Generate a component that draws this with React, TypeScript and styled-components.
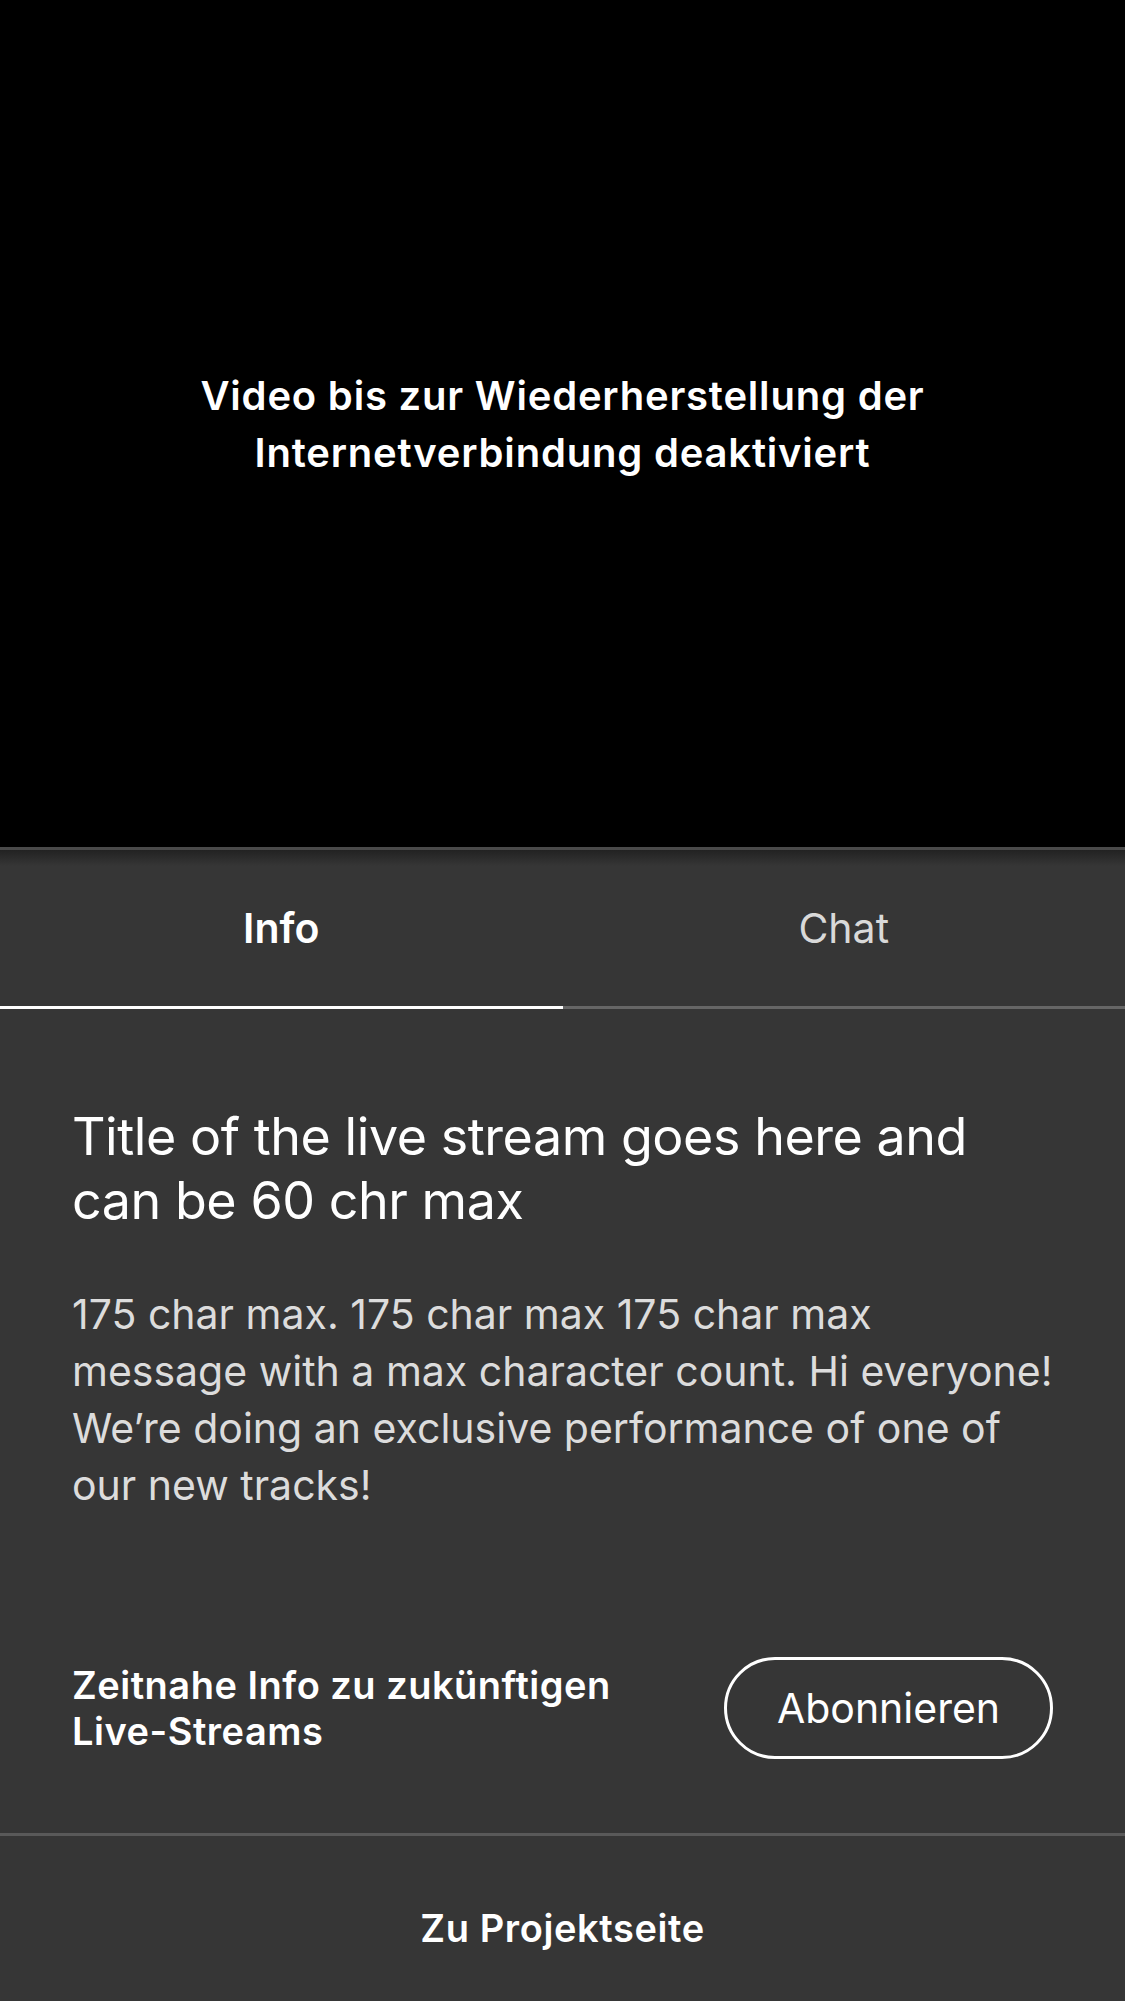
import React, { useState } from 'react';
import styled, { createGlobalStyle } from 'styled-components';

const GlobalStyle = createGlobalStyle`
  html, body {
    margin: 0;
    padding: 0;
    background: #363636;
  }
  body {
    font-family: Inter, "Noto Sans", "Liberation Sans", sans-serif;
    -webkit-font-smoothing: antialiased;
  }
`;

const Screen = styled.div`
  width: 1125px;
  min-height: 2001px;
  display: flex;
  flex-direction: column;
  background: #363636;
  color: #fff;
`;

const VideoArea = styled.div`
  height: 847px;
  background: #000;
  display: flex;
  align-items: center;
  justify-content: center;
  border-bottom: 3px solid #4a4a4a;
`;

const OfflineText = styled.p`
  margin: 0;
  font-size: 40px;
  line-height: 57px;
  font-weight: 600;
  text-align: center;
  letter-spacing: 0.8px;
`;

const TabBar = styled.div`
  display: flex;
  background: linear-gradient(#222 0px, #363636 16px);
`;

const Tab = styled.button<{ active: boolean }>`
  flex: 1;
  height: 159px;
  border: none;
  background: transparent;
  font-family: inherit;
  font-size: 41px;
  font-weight: ${p => (p.active ? 600 : 400)};
  color: ${p => (p.active ? '#fff' : '#d9d9d9')};
  border-bottom: 3px solid ${p => (p.active ? '#fff' : '#666')};
  padding: 0;
  cursor: pointer;
`;

const Content = styled.div`
  padding: 96px 72px 0;
  display: flex;
  flex-direction: column;
`;

const Title = styled.h1`
  margin: 0;
  font-size: 52px;
  line-height: 64px;
  font-weight: 400;
  color: #fff;
  letter-spacing: -0.45px;
`;

const Description = styled.p`
  margin: 53px 0 0;
  font-size: 41px;
  line-height: 57px;
  color: #dcdcdc;
  letter-spacing: 0;
`;

const SubscribeRow = styled.div`
  margin-top: 143px;
  display: flex;
  align-items: center;
  justify-content: space-between;
  gap: 40px;
`;

const SubscribeText = styled.div`
  font-size: 38px;
  line-height: 46px;
  font-weight: 600;
  color: #fff;
  max-width: 580px;
  letter-spacing: 0.5px;
`;

const OutlineButton = styled.button`
  width: 329px;
  height: 102px;
  flex-shrink: 0;
  border: 3px solid #fff;
  border-radius: 51px;
  background: transparent;
  color: #fff;
  font-family: inherit;
  font-size: 41px;
  font-weight: 400;
  cursor: pointer;
`;

const Divider = styled.div`
  height: 3px;
  background: #595959;
  margin-top: 74px;
`;

const FooterLink = styled.a`
  display: block;
  padding-top: 68px;
  text-align: center;
  font-size: 38px;
  line-height: 48px;
  font-weight: 600;
  color: #fff;
  text-decoration: none;
  letter-spacing: 0.6px;
`;

const App: React.FC = () => {
  const [tab, setTab] = useState<'info' | 'chat'>('info');

  return (
    <Screen>
      <GlobalStyle />
      <VideoArea>
        <OfflineText>
          Video bis zur Wiederherstellung der
          <br />
          Internetverbindung deaktiviert
        </OfflineText>
      </VideoArea>

      <TabBar>
        <Tab active={tab === 'info'} onClick={() => setTab('info')}>Info</Tab>
        <Tab active={tab === 'chat'} onClick={() => setTab('chat')}>Chat</Tab>
      </TabBar>

      <Content>
        <Title>Title of the live stream goes here and can be 60 chr max</Title>
        <Description>
          175 char max. 175 char max 175 char max message with a max character count. Hi everyone!
          We’re doing an exclusive performance of one of our new tracks!
        </Description>
        <SubscribeRow>
          <SubscribeText>Zeitnahe Info zu zukünftigen Live-Streams</SubscribeText>
          <OutlineButton>Abonnieren</OutlineButton>
        </SubscribeRow>
      </Content>

      <Divider />
      <FooterLink href="#">Zu Projektseite</FooterLink>
    </Screen>
  );
};

export default App;
